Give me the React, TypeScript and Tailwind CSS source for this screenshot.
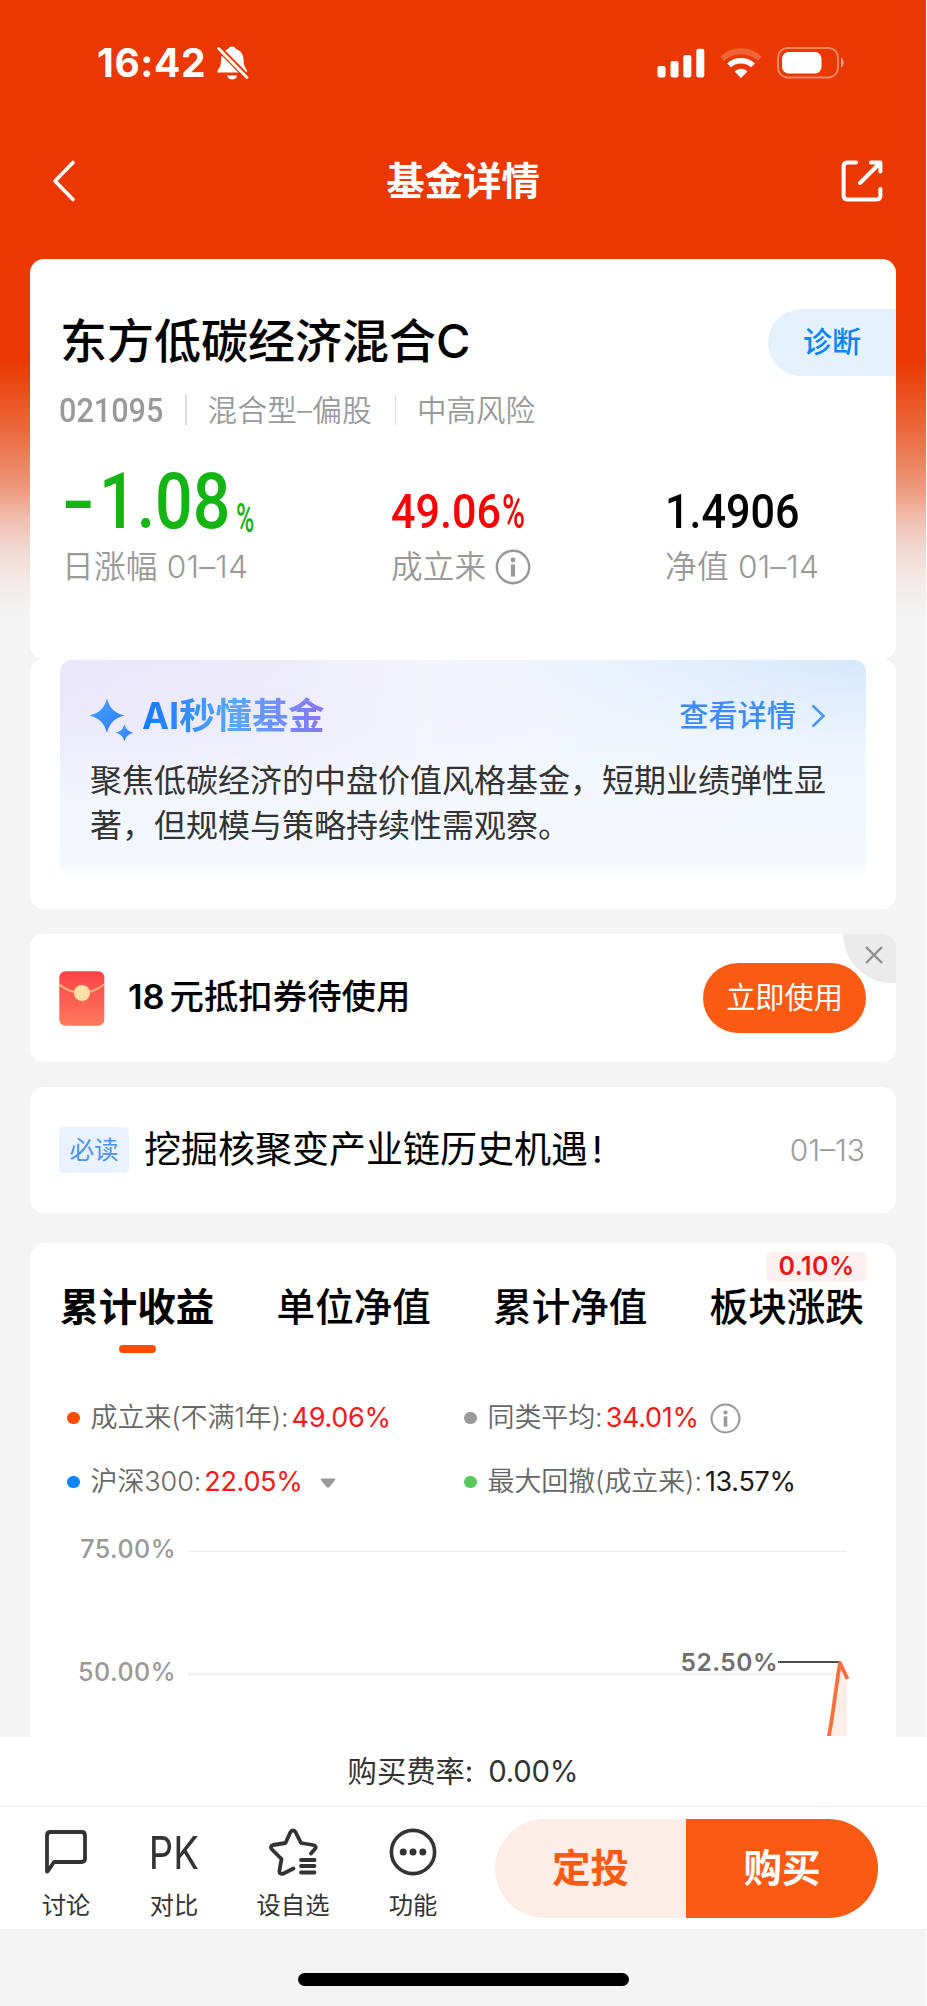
import React, { useState } from 'react';

interface LegendItem {
  label: string;
  value: string;
  dotClass: string;
  valueClass: string;
  extra?: 'info' | 'caret';
}

const TABS = ['累计收益', '单位净值', '累计净值', '板块涨跌'];

const LEGEND: LegendItem[] = [
  { label: '成立来(不满1年):', value: '49.06%', dotClass: 'bg-[#ff4d00]', valueClass: 'text-[#f41a1a]' },
  { label: '同类平均:', value: '34.01%', dotClass: 'bg-[#999999]', valueClass: 'text-[#f41a1a]', extra: 'info' },
  { label: '沪深300:', value: '22.05%', dotClass: 'bg-[#0a84ff]', valueClass: 'text-[#f41a1a]', extra: 'caret' },
  { label: '最大回撤(成立来):', value: '13.57%', dotClass: 'bg-[#5ac85a]', valueClass: 'text-[#1a1a1a]' },
];

function InfoIcon({ size }: { size: number }) {
  return (
    <svg width={size} height={size} viewBox="0 0 36 36" fill="none" className="shrink-0">
      <circle cx="18" cy="18" r="16.2" stroke="#999" strokeWidth="2.4" />
      <circle cx="18" cy="11" r="2.4" fill="#999" />
      <path d="M18 15.5V27.5" stroke="#999" strokeWidth="4.2" />
    </svg>
  );
}

function StatusBar() {
  return (
    <div className="flex h-[126px] items-center justify-between pl-[97px] pr-[80px]">
      <div className="flex items-center">
        <span className="w-[119px] text-[39px] leading-[40px] font-bold tracking-[0.6px]">16:42</span>
        <svg width="33" height="36" viewBox="0 0 33 36" fill="#fff">
          <path d="M16 1.500C18 1.500 19.400 2.500 20 4C25 5.600 27.600 10 27.600 15C27.600 20 29 22.400 31 25.500V27.500H1.500V25.500C4 22.400 5 20 5 15C5 10 7.600 5.600 12 4C12.600 2.500 14 1.500 16 1.500Z" />
          <path d="M11 30.500H21.400C20.600 33.200 18.600 34.600 16.200 34.600C13.800 34.600 11.800 33.200 11 30.500Z" />
          <path d="M1 1.500L33 34" stroke="#ea3800" strokeWidth="6" />
          <path d="M2.600 3.600L31 32.600" stroke="#fff" strokeWidth="2.800" strokeLinecap="round" />
        </svg>
      </div>
      <div className="flex items-center">
        <svg width="48" height="30" viewBox="0 0 48 30" fill="#fff">
          <rect x="0.5" y="18" width="8" height="11.5" rx="2.2" />
          <rect x="13.5" y="13" width="8" height="16.5" rx="2.2" />
          <rect x="26.3" y="7" width="8" height="22.5" rx="2.2" />
          <rect x="39.3" y="0.8" width="8" height="28.7" rx="2.2" />
        </svg>
        <svg width="42" height="31" viewBox="0 0 42 31" fill="none" className="ml-[15px]">
          <path d="M2.2 10.8C12.6 0.8 29.4 0.8 39.8 10.8" stroke="#fff" strokeOpacity="0.22" strokeWidth="6" />
          <path d="M9 17.4C15.6 11.2 26.4 11.2 33 17.4" stroke="#fff" strokeWidth="5.4" />
          <path d="M14.6 23.4C18.2 20 23.8 20 27.4 23.4L21 30Z" fill="#fff" />
        </svg>
        <svg width="69" height="32" viewBox="0 0 69 32" fill="none" className="ml-[15px]">
          <rect x="1" y="1" width="60" height="29.4" rx="9.5" stroke="#fff" strokeOpacity="0.4" strokeWidth="2" />
          <rect x="5" y="5" width="39.5" height="21.4" rx="6.5" fill="#fff" />
          <path d="M64 10.6C67.6 12.4 67.6 19 64 20.8Z" fill="#fff" fillOpacity="0.5" />
        </svg>
      </div>
    </div>
  );
}

function NavBar() {
  return (
    <div className="flex h-[110px] items-center justify-between pl-[51px] pr-[42px]">
      <svg width="44" height="44" viewBox="0 0 44 44" fill="none">
        <path d="M22 3.5L4 22L22 40.5" stroke="#fff" strokeWidth="3.6" strokeLinecap="round" strokeLinejoin="round" />
      </svg>
      <h1 className="mr-[9px] text-[38.4px] leading-[48px] font-bold">基金详情</h1>
      <svg width="44" height="44" viewBox="0 0 44 44" fill="none" stroke="#fff" strokeWidth="4" strokeLinecap="round" strokeLinejoin="round">
        <path d="M16 3.6H7.5C5 3.6 3.6 5 3.6 7.5V36.5C3.6 39 5 40.4 7.5 40.4H36.5C39 40.4 40.4 39 40.4 36.5V30" />
        <path d="M31 3.6H40.4V12.5M40 4L20 24" />
      </svg>
    </div>
  );
}

function SummaryCard() {
  return (
    <section className="h-[400px] rounded-[14px] bg-white pt-[50px]">
      <div className="flex h-[67px] items-center justify-between pl-[30px]">
        <h2 className="-mt-[3px] text-[47px] leading-[60px] font-medium text-black">东方低碳经济混合C</h2>
        <button className="flex h-[67px] w-[128px] items-center rounded-l-full bg-[#e5f2fd] pl-[35px] text-[29px] font-medium text-[#0a84ff]">
          诊断
        </button>
      </div>
      <div className="mt-[14px] flex h-10 items-center pl-[29px] text-[29.5px] text-[#999999]">
        <span className="w-[126px]">
          <span className="inline-block origin-left scale-x-[0.9] font-[Roboto] text-[34px] font-medium">021095</span>
        </span>
        <span className="mr-[21px] h-[30px] w-[1.5px] bg-[#dddddd]" />
        <span className="w-[187px] font-[350] tracking-[0.4px] whitespace-nowrap">混合型–偏股</span>
        <span className="mr-[21px] h-[30px] w-[1.5px] bg-[#dddddd]" />
        <span className="font-[350]">中高风险</span>
      </div>
      <div className="mt-[42px] grid h-[60px] grid-cols-[329px_274px_1fr] items-baseline pl-[32px] font-[Roboto] font-medium">
        <div className="flex items-baseline text-[#14b414]">
          <span className="mr-[8px] inline-block w-[29px] origin-left scale-x-[1.25] text-[77px] leading-[60px]">-</span>
          <span className="inline-block w-[137px] origin-left scale-x-[0.86] text-[77px] leading-[60px]">1.08</span>
          <span className="inline-block origin-left translate-y-[4px] scale-x-[0.62] text-[40px] leading-[40px]">%</span>
        </div>
        <div className="flex items-baseline text-[49px] leading-[60px] text-[#ff0000]">
          <span className="inline-block w-[111px] origin-left scale-x-[0.88]">49.06</span>
          <span className="inline-block origin-left scale-x-[0.64]">%</span>
        </div>
        <div className="origin-left scale-x-[0.88] text-[49px] leading-[60px] text-black">1.4906</div>
      </div>
      <div className="mt-[15px] grid h-10 grid-cols-[329px_274px_1fr] items-center pl-[32px] text-[31.7px] leading-10 font-[350] text-[#999999]">
        <span className="tracking-[0.2px]">日涨幅 01–14</span>
        <span className="flex items-center gap-[9px]">
          成立来
          <InfoIcon size={36} />
        </span>
        <span className="tracking-[0.2px]">净值 01–14</span>
      </div>
    </section>
  );
}

function AiCard() {
  return (
    <section className="h-[250px] rounded-[14px] bg-white px-[30px] pt-px">
      <div className="h-[219px] rounded-[12px] bg-[linear-gradient(180deg,rgba(243,248,255,0)_0%,rgba(243,248,255,0.15)_30%,rgba(243,248,255,0.9)_65%,#f3f8ff_92%,#ffffff_100%),radial-gradient(ellipse_at_100%_0%,#d6e8fe_0%,rgba(214,232,254,0)_30%),linear-gradient(90deg,#eae7fa_0%,#eceafb_24%,#f4f4fd_45%,#f0f5ff_60%,#ecf4ff_100%)] px-[30px] pt-[36px]">
        <div className="flex h-10 items-center">
          <svg width="44" height="44" viewBox="0 0 44 44" className="mt-2">
            <defs>
              <linearGradient id="spark" x1="0" y1="0" x2="1" y2="1">
                <stop offset="0" stopColor="#4ba3fb" />
                <stop offset="1" stopColor="#2a7bfd" />
              </linearGradient>
            </defs>
            <path d="M17 0.5C19.5 10 24.5 15 34.5 17.5C24.5 20 19.5 25 17 35C14.5 25 9.5 20 -0.5 17.5C9.5 15 14.5 10 17 0.5Z" fill="url(#spark)" />
            <path d="M34.5 26C35.8 31 38.5 33.5 43.5 34.8C38.5 36 35.8 38.5 34.5 43.5C33.2 38.5 30.5 36 25.5 34.8C30.5 33.5 33.2 31 34.5 26Z" fill="url(#spark)" />
          </svg>
          <span className="ml-[8px] bg-[linear-gradient(90deg,#147bff_0%,#2e88fe_20%,#58a8fb_50%,#6b94fb_70%,#8676fc_100%)] bg-clip-text text-[36.3px] leading-[48px] font-bold text-transparent">
            AI秒懂基金
          </span>
          <span className="ml-auto text-[29.2px] font-medium text-[#3c8cf8]">查看详情</span>
          <svg width="16" height="26" viewBox="0 0 16 26" fill="none" className="mr-[10px] ml-[14px]">
            <path d="M2.5 2.5L13.5 13L2.5 23.5" stroke="#4c98f8" strokeWidth="2.6" />
          </svg>
        </div>
        <p className="mt-[23px] w-[740px] text-[32px] leading-[44.6px] text-[#333333]">
          聚焦低碳经济的中盘价值风格基金，短期业绩弹性显著，但规模与策略持续性需观察。
        </p>
      </div>
    </section>
  );
}

function CouponCard({ onClose }: { onClose: () => void }) {
  return (
    <section className="relative mt-[25px] flex h-[128px] items-center overflow-hidden rounded-[14px] bg-white pr-[30px] pl-[29px]">
      <svg width="46" height="55" viewBox="0 0 46 55" fill="none">
        <defs>
          <linearGradient id="envelope" x1="0" y1="0" x2="0" y2="1">
            <stop offset="0" stopColor="#fd4348" />
            <stop offset="1" stopColor="#fe7a5c" />
          </linearGradient>
        </defs>
        <rect x="0.3" y="0.3" width="45" height="54.4" rx="6" fill="url(#envelope)" />
        <path d="M0.3 13.5C14 24.5 31 24.5 45.3 13.5" stroke="#fdb27e" strokeWidth="2.2" />
        <circle cx="23" cy="22" r="8" fill="#fde0a6" />
      </svg>
      <p className="-mt-[3px] ml-[23px] text-[34.4px] font-medium text-black">
        <span className="mr-[5px] font-semibold">18</span>元抵扣券待使用
      </p>
      <button className="ml-auto flex h-[70px] w-[163px] items-center justify-center rounded-full bg-[#fb5a13] text-[29.2px] text-white">
        立即使用
      </button>
      <button
        onClick={onClose}
        aria-label="关闭"
        className="absolute top-0 right-0 flex h-[49px] w-[53px] items-center justify-center rounded-bl-[53px] bg-[#ebebeb] pt-0 pl-[8px]"
      >
        <svg width="18" height="18" viewBox="0 0 18 18" className="-mt-[8px]">
          <path d="M1 1L17 17M17 1L1 17" stroke="#8f8f8f" strokeWidth="2.4" />
        </svg>
      </button>
    </section>
  );
}

function NoticeCard() {
  return (
    <section className="mt-[25px] flex h-[126px] items-center rounded-[14px] bg-white pr-[31px] pl-[29px]">
      <span className="flex h-[46px] w-[70px] items-center justify-center rounded-[5px] bg-[#e9f2fe] text-[24.5px] text-[#4b93f7]">
        必读
      </span>
      <span className="ml-[15px] text-[37px] text-black">
        挖掘核聚变产业链历史机遇<span className="ml-[4px]">!</span>
      </span>
      <span className="ml-auto text-[30px] font-[350] text-[#999999]">01–13</span>
    </section>
  );
}

function Chart() {
  return (
    <div className="relative h-[230px]">
      <svg width="866" height="230" viewBox="0 0 866 230" fill="none">
        <path d="M158 45.3H817" stroke="#ececec" strokeWidth="1.3" />
        <path d="M158 168H817" stroke="#f0f0f0" strokeWidth="2.4" />
        <path d="M799 231C804 204 808 168 810 157L817 173V231Z" fill="#fdeeea" />
        <path d="M748 156H810" stroke="#4d4d4d" strokeWidth="2" />
        <path d="M798.5 232C804 204 807 172 810 157L817.5 173" stroke="#fb6f3c" strokeWidth="3.8" strokeLinejoin="round" />
      </svg>
      <span className="absolute top-[29px] right-[720px] text-[25px] leading-[28px] font-medium tracking-[0.5px] text-[#999999]">75.00%</span>
      <span className="absolute top-[152px] right-[720px] text-[25px] leading-[28px] font-medium tracking-[0.5px] text-[#999999]">50.00%</span>
      <span className="absolute top-[142px] right-[118px] text-[24.5px] leading-[28px] font-semibold tracking-[0.5px] text-[#6e6e6e]">52.50%</span>
    </div>
  );
}

function PerformanceCard() {
  const [active, setActive] = useState(0);

  return (
    <section className="mt-[30px] h-[494px] overflow-hidden rounded-t-[16px] bg-white">
      <div className="flex h-[116px] gap-[62px] pt-[36px] pl-[30px]">
        {TABS.map((tab, index) => (
          <button key={tab} onClick={() => setActive(index)} className="relative flex w-[154.5px] flex-col items-center">
            <span className={index === active ? 'text-[38.6px] leading-[56px] font-bold text-black' : 'text-[38.6px] leading-[56px] font-medium text-black'}>
              {tab}
            </span>
            {index === active && <span className="mt-[10px] h-[8px] w-[37px] rounded-full bg-[#ff4d00]" />}
            {index === 3 && (
              <span className="absolute -top-[27px] -right-[3px] flex h-[30px] w-[101px] items-center justify-center rounded-[5px] bg-[#fff0f0] text-[25px] font-semibold tracking-[0.5px] text-[#f01414]">
                0.10%
              </span>
            )}
          </button>
        ))}
      </div>
      <div className="mt-[27px] grid grid-cols-[397px_1fr] pl-[37px]">
        {LEGEND.map((item) => (
          <div key={item.label} className="flex h-[64px] items-center text-[27px] whitespace-nowrap">
            <span className={`mr-[11px] h-[12.5px] w-[12.5px] rounded-full ${item.dotClass}`} />
            <span className="font-[350] tracking-[-0.1px] text-[#666666]">{item.label}</span>
            <span className={`ml-[3px] tracking-[-0.3px] ${item.valueClass}`}>{item.value}</span>
            {item.extra === 'info' && (
              <span className="ml-[11px]">
                <InfoIcon size={31} />
              </span>
            )}
            {item.extra === 'caret' && (
              <svg width="16" height="11" viewBox="0 0 16 11" className="mt-[3px] ml-[18px]">
                <path d="M2 0.5H14C15.400 0.500 15.600 1.600 14.900 2.400L9.300 9C8.600 9.800 7.400 9.800 6.700 9L1.100 2.400C0.400 1.600 0.600 0.500 2 0.500Z" fill="#999" />
              </svg>
            )}
          </div>
        ))}
      </div>
      <div className="-mt-[8px]">
        <Chart />
      </div>
    </section>
  );
}

function BottomBar() {
  return (
    <footer className="bg-white text-[#333333]">
      <div className="flex h-[70px] items-center justify-center border-b-[1.5px] border-[#f0f0f0] text-[29.3px]">
        购买费率: <span className="ml-[15px] tracking-[-0.2px]">0.00%</span>
      </div>
      <div className="flex h-[122px] pl-[31px] text-[24.3px]">
        <button className="flex w-[70px] flex-col items-center pt-[20px]">
          <svg width="48" height="50" viewBox="0 0 48 50" fill="none">
            <path d="M5 44.5V8.5C5 6 6 5 8.5 5H39.5C42 5 43 6 43 8.5V31.5C43 34 42 35 39.5 35H12L5.500 44.500Z" stroke="#333" strokeWidth="3.8" strokeLinejoin="round" />
          </svg>
          <span className="mt-[10px] leading-[36px]">讨论</span>
        </button>
        <button className="ml-[38px] flex w-[70px] flex-col items-center pt-[20px]">
          <span className="h-[50px] scale-x-[0.84] text-[45.5px] leading-[52px]">PK</span>
          <span className="mt-[10px] leading-[36px]">对比</span>
        </button>
        <button className="ml-[44px] flex w-[80px] flex-col items-center pt-[20px]">
          <svg width="50" height="50" viewBox="0 0 50 50" fill="none" stroke="#333" strokeWidth="3.8" strokeLinecap="round" strokeLinejoin="round">
            <path d="M25.5 41.500L15.500 46.500C13 47.500 11 46.500 11.500 43.500L13.500 32L4 22.500C2 20.500 3 18.500 5 18L17.500 16L22.500 5C23.500 3 26.500 3 27.500 5L33 16L45 18C48 18.500 48.500 20.500 46.500 22.500L43 26.500" />
            <path d="M33 33H46.500M33 39H46.500M33 45.500H46.500" />
          </svg>
          <span className="mt-[10px] leading-[36px]">设自选</span>
        </button>
        <button className="ml-[45px] flex w-[70px] flex-col items-center pt-[20px]">
          <svg width="50" height="50" viewBox="0 0 50 50" fill="none">
            <circle cx="25" cy="25" r="21.6" stroke="#333" strokeWidth="3.6" />
            <circle cx="15.2" cy="25" r="3.5" fill="#333" />
            <circle cx="25" cy="25" r="3.5" fill="#333" />
            <circle cx="34.8" cy="25" r="3.5" fill="#333" />
          </svg>
          <span className="mt-[10px] leading-[36px]">功能</span>
        </button>
        <div className="mt-[12px] ml-[47px] flex h-[99px] overflow-hidden rounded-full text-[38.5px] font-bold">
          <button className="w-[191px] bg-[#fdede7] text-[#fb5a13]">定投</button>
          <button className="w-[192px] bg-[#fb5a13] text-white">购买</button>
        </div>
      </div>
    </footer>
  );
}

export default function App() {
  const [showCoupon, setShowCoupon] = useState(true);

  return (
    <div className="h-[2006px] w-[926px] overflow-hidden bg-[#f4f4f4] bg-[linear-gradient(180deg,#ea3800_0px,#ea3800_360px,#ec6e44_437px,#ee9a80_490px,#f1c0b0_520px,#f2d9d2_550px,#f3ebe9_583px,#f4f4f4_615px)] font-['Inter','Noto_Sans_CJK_SC',sans-serif]">
      <header className="h-[259px] text-white">
        <StatusBar />
        <NavBar />
      </header>
      <main className="px-[30px]">
        <SummaryCard />
        <AiCard />
        {showCoupon && <CouponCard onClose={() => setShowCoupon(false)} />}
        <NoticeCard />
        <PerformanceCard />
      </main>
      <BottomBar />
      {/* Home indicator */}
      <div className="flex justify-center pt-[44px]">
        <span className="h-[13px] w-[331px] rounded-full bg-black" />
      </div>
    </div>
  );
}
